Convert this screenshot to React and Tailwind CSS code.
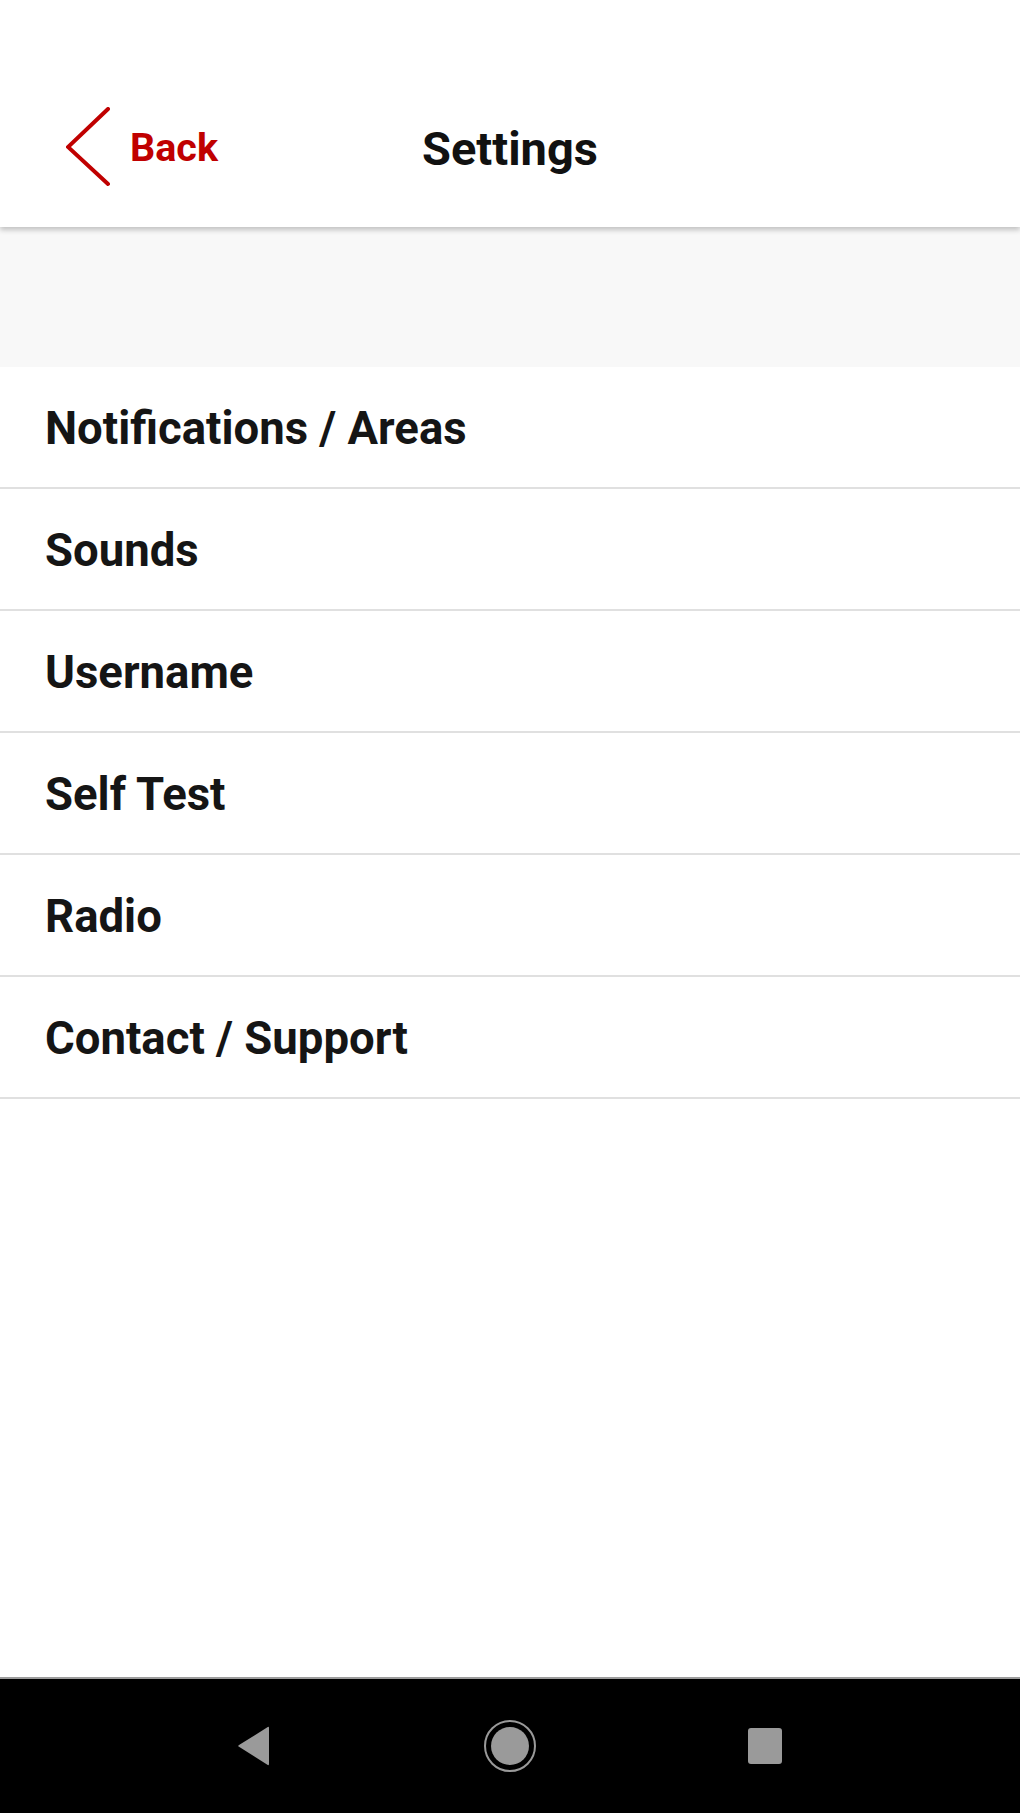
const ITEMS = [
  "Notifications / Areas",
  "Sounds",
  "Username",
  "Self Test",
  "Radio",
  "Contact / Support",
]

const SettingsRow = ({ label }) => (
  <div className="h-[122px] flex items-center pl-[45px] pt-[4px] border-b-2 border-[#e0e0e0] bg-white">
    <span className="text-[45.5px] leading-none font-bold text-[#151515]">{label}</span>
  </div>
)

const NavBar = () => (
  <div className="h-[136px] bg-black border-t-2 border-[#9c9c9c] grid grid-cols-3 items-center">
    {/* back */}
    <div className="flex justify-end pr-[68px]">
      <svg width="36" height="40" viewBox="0 0 36 40">
        <path
          d="M33 2 L33 38 Q33 40 31 38.5 L3 20.8 Q1.5 20 3 19 L31 1.5 Q33 0 33 2 Z"
          fill="#9a9a9a"
        />
      </svg>
    </div>
    {/* home */}
    <div className="flex justify-center">
      <div className="w-[52px] h-[52px] rounded-full border-2 border-[#9a9a9a] flex items-center justify-center">
        <div className="w-[38px] h-[38px] rounded-full bg-[#9a9a9a]" />
      </div>
    </div>
    {/* recents */}
    <div className="flex justify-start pl-[68px]">
      <div className="w-[34px] h-[36px] rounded-[3px] bg-[#9a9a9a]" />
    </div>
  </div>
)

export default function App() {
  return (
    <div
      className="h-[1813px] w-full flex flex-col bg-white"
      style={{ fontFamily: "Roboto, 'Liberation Sans', sans-serif" }}
    >
      {/* Header */}
      <div className="relative z-10 h-[227px] bg-white shadow-[0_3px_5px_rgba(0,0,0,0.22)] grid grid-cols-[1fr_auto_1fr] items-center pt-[69px]">
        <div className="flex items-center pl-[66px]">
          <svg width="46" height="80" viewBox="0 0 46 80" className="mb-[2px]">
            <polyline
              points="42,2 2,40 42,77"
              fill="none"
              stroke="#c00000"
              strokeWidth="4"
              strokeLinecap="round"
              strokeLinejoin="miter"
            />
          </svg>
          <span className="ml-[18px] text-[39.5px] leading-none font-bold text-[#c00000]">Back</span>
        </div>
        <h1 className="text-[47px] leading-none font-bold text-[#111]">Settings</h1>
        <div />
      </div>

      {/* Spacer band */}
      <div className="h-[140px] bg-[#f8f8f8]" />

      {/* List */}
      <div className="flex flex-col">
        {ITEMS.map((item) => (
          <SettingsRow key={item} label={item} />
        ))}
      </div>

      <div className="flex-1 bg-white" />

      <NavBar />
    </div>
  )
}
